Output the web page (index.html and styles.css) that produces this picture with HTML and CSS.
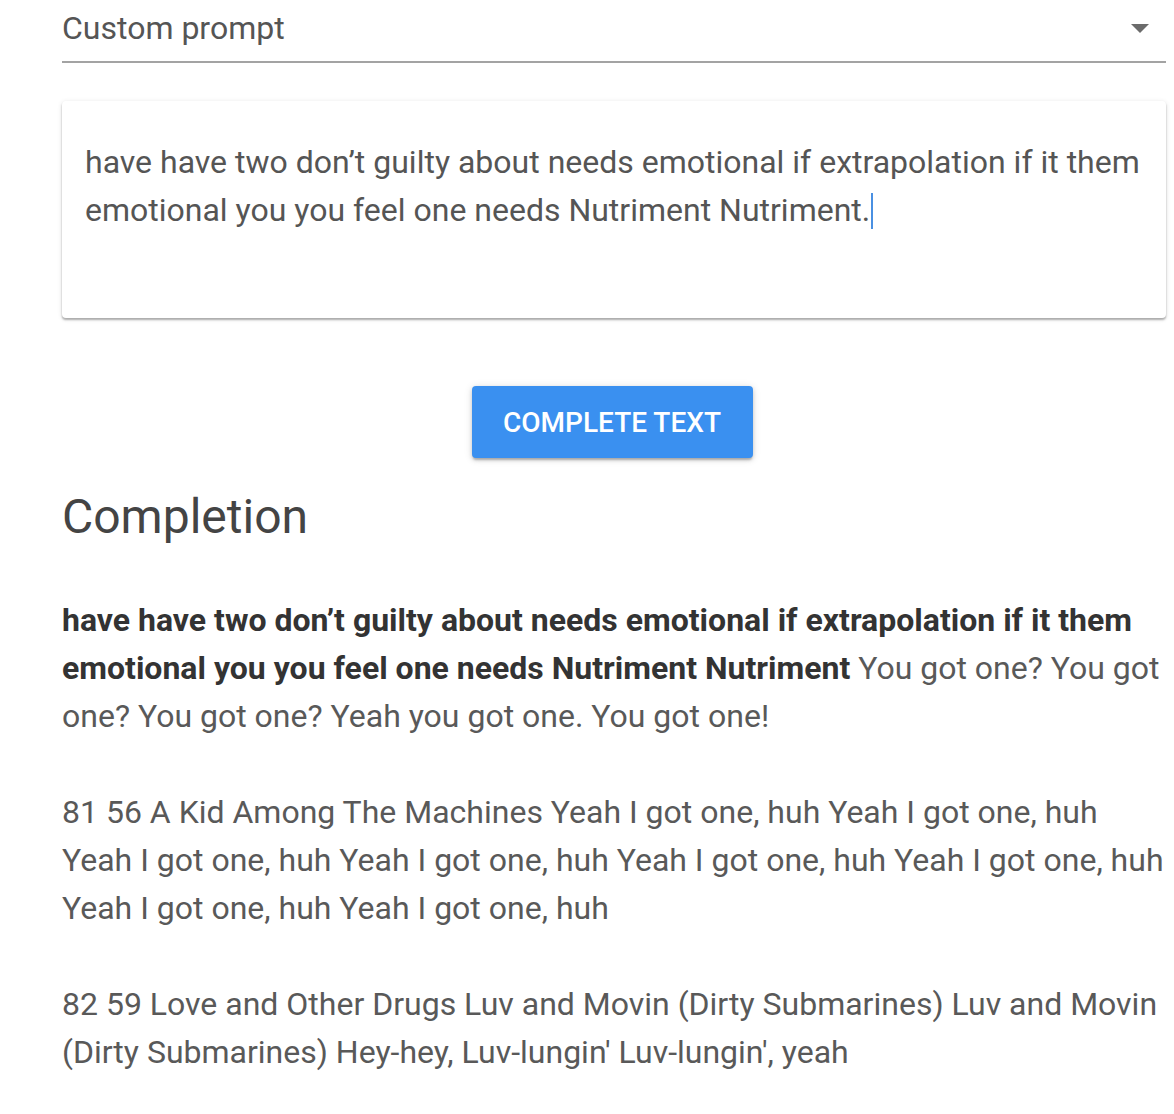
FILE: index.html
```html
<!DOCTYPE html>
<html lang="en">
<head>
<meta charset="utf-8">
<title>Complete text</title>
<link rel="stylesheet" href="styles.css">
</head>
<body>
<main class="page">
  <div class="select">
    <span class="select-value">Custom prompt</span>
    <svg class="select-arrow" width="18" height="10" viewBox="0 0 18 10"><path d="M0 0 L18 0 L9 9 Z" fill="#6b6b6b"/></svg>
  </div>

  <div class="card">
    <div class="prompt">have have two don’t guilty about needs emotional if extrapolation if it them emotional you you feel one needs Nutriment Nutriment.<span class="caret"></span></div>
  </div>

  <div class="actions">
    <button class="btn">Complete text</button>
  </div>

  <h2 class="heading">Completion</h2>

  <p class="para"><strong>have have two don’t guilty about needs emotional if extrapolation if it them emotional you you feel one needs Nutriment Nutriment</strong> You got one? You got one? You got one? Yeah you got one. You got one!</p>
  <p class="para">81 56 A Kid Among The Machines Yeah I got one, huh Yeah I got one, huh Yeah I got one, huh Yeah I got one, huh Yeah I got one, huh Yeah I got one, huh Yeah I got one, huh Yeah I got one, huh</p>
  <p class="para">82 59 Love and Other Drugs Luv and Movin (Dirty Submarines) Luv and Movin (Dirty Submarines) Hey-hey, Luv-lungin' Luv-lungin', yeah</p>
</main>
</body>
</html>
```

FILE: styles.css
```css
html, body {
  margin: 0;
  padding: 0;
  background: #ffffff;
}

body {
  font-family: Roboto, "Liberation Sans", Arial, sans-serif;
  color: #555555;
}

.page {
  width: 1104px;
  margin-left: 62px;
}

.select {
  display: flex;
  align-items: center;
  justify-content: space-between;
  height: 61px;
  border-bottom: 2px solid #a3a3a3;
  box-sizing: content-box;
}

.select-value {
  font-size: 32px;
  line-height: 48px;
  color: #555555;
  margin-top: -6px;
}

.select-arrow {
  margin-right: 17px;
  margin-top: -3px;
}

.card {
  margin-top: 38px;
  background: #ffffff;
  border-radius: 4px;
  box-shadow: 0 2px 2px rgba(0,0,0,0.28), 0 1px 5px rgba(0,0,0,0.12);
  padding: 37px 23px 36px 23px;
}

.prompt {
  font-size: 32px;
  line-height: 48px;
  height: 144px;
  color: #555555;
}

.caret {
  display: inline-block;
  width: 2px;
  height: 36px;
  background: #4a90e2;
  vertical-align: -8px;
  margin-left: 1px;
}

.actions {
  display: flex;
  justify-content: center;
  margin-top: 68px;
}

.btn {
  width: 281px;
  height: 72px;
  border: none;
  border-radius: 4px;
  background: #3a90f0;
  color: #ffffff;
  font-family: Roboto, "Liberation Sans", Arial, sans-serif;
  font-weight: 500;
  font-size: 28px;
  text-transform: uppercase;
  box-shadow: 0 3px 2px -1px rgba(0,0,0,0.2), 0 2px 4px rgba(0,0,0,0.14), 0 1px 8px rgba(0,0,0,0.12);
  margin-left: -4px;
}

.heading {
  margin: 31px 0 0 0;
  font-size: 48px;
  font-weight: 400;
  line-height: 56px;
  color: #444444;
}

.para {
  margin: 51px 0 0 0;
  font-size: 32px;
  line-height: 48px;
  color: #595959;
}

.para + .para {
  margin-top: 48px;
}

.para strong {
  font-weight: 700;
  color: #333333;
}
```
